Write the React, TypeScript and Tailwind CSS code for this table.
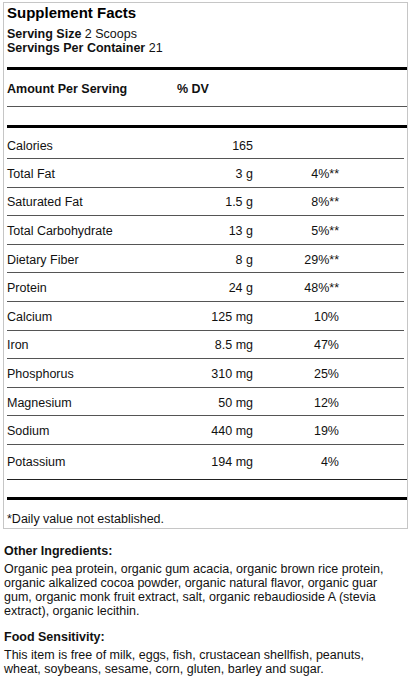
const rows: [string, string, string][] = [
  ["Total Fat", "3 g", "4%**"],
  ["Saturated Fat", "1.5 g", "8%**"],
  ["Total Carbohydrate", "13 g", "5%**"],
  ["Dietary Fiber", "8 g", "29%**"],
  ["Protein", "24 g", "48%**"],
  ["Calcium", "125 mg", "10%"],
  ["Iron", "8.5 mg", "47%"],
  ["Phosphorus", "310 mg", "25%"],
  ["Magnesium", "50 mg", "12%"],
  ["Sodium", "440 mg", "19%"],
];

function Row({ name, amount, dv, className }: { name: string; amount: string; dv: string; className: string }) {
  return (
    <div className={`grid grid-cols-[170px_76px_86px] items-center ${className}`}>
      <span>{name}</span>
      <span className="text-right">{amount}</span>
      <span className="text-right">{dv}</span>
    </div>
  );
}

export default function App() {
  return (
    <div className="min-h-[679px] w-[416px] bg-white pt-[2px] font-['Liberation_Sans',Arial,sans-serif] text-[12.5px] leading-[14px] text-[#111]">
      <section className="ml-[3px] w-[405px] border border-[#c6c6c6] pl-[3px]">
        <h1 className="pt-[1px] text-[15px] font-bold leading-[18px] text-black">Supplement Facts</h1>
        <p className="mt-[5px]">
          <b>Serving Size</b> 2 Scoops
        </p>
        <p>
          <b>Servings Per Container</b> 21
        </p>
        <div className="mt-[12px] h-[3px] bg-black" />
        <div className="grid h-[37px] grid-cols-[170px_1fr] items-center border-b border-[#555] pt-[1px] font-bold">
          <span>Amount Per Serving</span>
          <span>% DV</span>
        </div>
        <div className="mt-[18px] h-[3px] bg-black" />

        <div className="mr-[3px]">
          <Row name="Calories" amount="165" dv="" className="h-[31px] border-b border-[#555] pt-[6px]" />
          {rows.map(([name, amount, dv]) => (
            <Row key={name} name={name} amount={amount} dv={dv} className="h-[28.6px] border-b border-[#555] pt-[2px]" />
          ))}
        </div>
        <Row name="Potassium" amount="194 mg" dv="4%" className="h-[35px] border-b border-[#222]" />

        <div className="mt-[17px] h-[3px] bg-black" />
        <p className="mb-[2px] mt-[12px]">*Daily value not established.</p>
      </section>

      <div className="w-[396px] px-[4px] pb-[8px]">
        <h2 className="mt-[15px] font-bold">Other Ingredients:</h2>
        <p className="mt-[4px]">
          Organic pea protein, organic gum acacia, organic brown rice protein, organic alkalized cocoa powder, organic
          natural flavor, organic guar gum, organic monk fruit extract, salt, organic rebaudioside A (stevia extract),
          organic lecithin.
        </p>
        <h2 className="mt-[12px] font-bold">Food Sensitivity:</h2>
        <p className="mt-[4px]">
          This item is free of milk, eggs, fish, crustacean shellfish, peanuts, wheat, soybeans, sesame, corn, gluten,
          barley and sugar.
        </p>
      </div>
    </div>
  );
}
